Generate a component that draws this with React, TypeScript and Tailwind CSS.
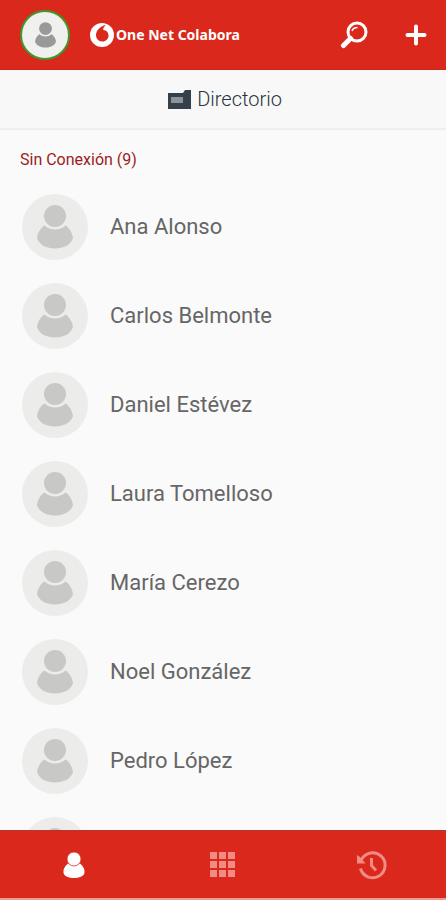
import React from "react";

const contacts = [
  "Ana Alonso",
  "Carlos Belmonte",
  "Daniel Estévez",
  "Laura Tomelloso",
  "María Cerezo",
  "Noel González",
  "Pedro López",
  "",
];

function Person({ className }: { className: string }) {
  return (
    <svg viewBox="0 0 36 44" className={className} fill="currentColor" aria-hidden="true">
      <circle cx="18" cy="11" r="11" />
      <path d="M7.500 20.500Q12 24.500 18 24.500T28.500 20.500C32 22.500 35 27 36 33C34 40 26 43.500 18 43.500S2 40 0 33C1 27 4 22.500 7.500 20.500Z" />
    </svg>
  );
}

function Header() {
  return (
    <header className="flex h-[70px] shrink-0 items-center border-b border-[#c9281d] bg-[#da291c] pr-[18px] pl-5 text-white">
      <button
        type="button"
        aria-label="Mi perfil"
        className="flex size-[50px] items-center justify-center rounded-full border-2 border-[#41962c] bg-[#f0f0ef] text-[#999999]"
      >
        <Person className="h-[26px] w-[21px]" />
      </button>
      <h1 className="ml-5 flex items-center gap-0.5 font-['Noto_Sans','Open_Sans',sans-serif] text-sm font-bold">
        <svg viewBox="0 0 24 24" className="size-6" aria-hidden="true">
          <circle cx="12" cy="12" r="12" fill="white" />
          <path
            d="M12.300 18.500C8.800 18.500 6 16 6 12.300C6 8 9.500 3.200 16 2C14 3.500 13 5 13.300 7C16.500 7.300 18.500 9.500 18.500 12.500C18.500 16 16 18.500 12.300 18.500Z"
            fill="#da291c"
          />
        </svg>
        One Net Colabora
      </h1>
      <div className="ml-auto flex items-center gap-9">
        <button type="button" aria-label="Buscar" className="flex h-10 w-7 items-center justify-center">
          <svg viewBox="0 0 28 28" className="size-7" fill="none" stroke="currentColor" aria-hidden="true">
            <circle cx="17" cy="11" r="9" strokeWidth="3" />
            <path d="M10.500 17.500L3.500 24.500" strokeWidth="5" strokeLinecap="round" />
            <path d="M12 10Q13 6.500 17.500 6.500" strokeWidth="1.500" />
          </svg>
        </button>
        <button type="button" aria-label="Añadir" className="flex h-10 w-6 items-center justify-center">
          <svg viewBox="0 0 24 24" className="size-6" fill="none" stroke="currentColor" strokeWidth="4" strokeLinecap="round" aria-hidden="true">
            <path d="M12 3.500V20.500M3.500 12H20.500" />
          </svg>
        </button>
      </div>
    </header>
  );
}

function BottomNav() {
  return (
    <nav className="grid h-[70px] shrink-0 grid-cols-3 border-t border-b-2 border-t-[#b5382e] border-b-[#ef9a94] bg-[#da291c] text-[#f08c83]">
      <button type="button" aria-label="Contactos" aria-current="page" className="flex items-center justify-center text-white">
        <svg viewBox="0 0 22 26" className="h-[26px] w-[22px]" fill="currentColor" aria-hidden="true">
          <path d="M5 11.500H17C20 14 22 17 21.500 20.500C21 24.500 16 26 11 26S1 24.500 0.500 20.500C0 17 2 14 5 11.500Z" />
          <circle cx="11" cy="7" r="7" stroke="#da291c" strokeWidth="0.800" />
        </svg>
      </button>
      <button type="button" aria-label="Teclado" className="flex items-center justify-center">
        <svg viewBox="0 0 25 25" className="size-[25px]" fill="currentColor" aria-hidden="true">
          <path d="M0 0h7v7H0zM9 0h7v7H9zM18 0h7v7h-7zM0 9h7v7H0zM9 9h7v7H9zM18 9h7v7h-7zM0 18h7v7H0zM9 18h7v7H9zM18 18h7v7h-7z" />
        </svg>
      </button>
      <button type="button" aria-label="Historial" className="flex items-center justify-center">
        <svg viewBox="0 0 32 30" className="h-[30px] w-8" fill="none" stroke="currentColor" aria-hidden="true">
          <path d="M5.500 9.500A12.500 12.500 0 1 1 4.500 18.500" strokeWidth="3" />
          <path d="M1 5L4 7L9.500 13.500H1Z" fill="currentColor" stroke="none" />
          <path d="M15.500 8V15.500L20 20.500" strokeWidth="3" />
        </svg>
      </button>
    </nav>
  );
}

export default function App() {
  return (
    <div className="flex h-screen flex-col bg-[#fafafa] font-[Roboto,'Noto_Sans',sans-serif]">
      <Header />
      <button
        type="button"
        className="flex h-[60px] shrink-0 items-center justify-center gap-1.5 border-b-2 border-[#efefef] bg-[#f8f8f8] pl-1 text-xl font-light text-[#29333c]"
      >
        <svg viewBox="0 0 23 19" className="h-[19px] w-[23px]" aria-hidden="true">
          <path d="M0 3H15L17 0H23V19H0Z" fill="#34404a" />
          <path d="M3 7H15V13H3Z" fill="#8b949c" />
        </svg>
        Directorio
      </button>
      <main className="flex min-h-0 flex-1 flex-col overflow-hidden pt-4">
        <h2 className="px-5 text-base leading-7 text-[#9b1c22]">Sin Conexión (9)</h2>
        <ul className="pt-2">
          {contacts.map((name, i) => (
            <li key={i} className="flex h-[89px] items-center gap-[22px] px-[22px]">
              <span className="flex size-[66px] shrink-0 items-center justify-center rounded-full bg-[#ececeb] text-[#c8c8c7]">
                <Person className="h-11 w-9" />
              </span>
              <span className="text-[22px] text-[#666666]">{name}</span>
            </li>
          ))}
        </ul>
      </main>
      <BottomNav />
    </div>
  );
}
